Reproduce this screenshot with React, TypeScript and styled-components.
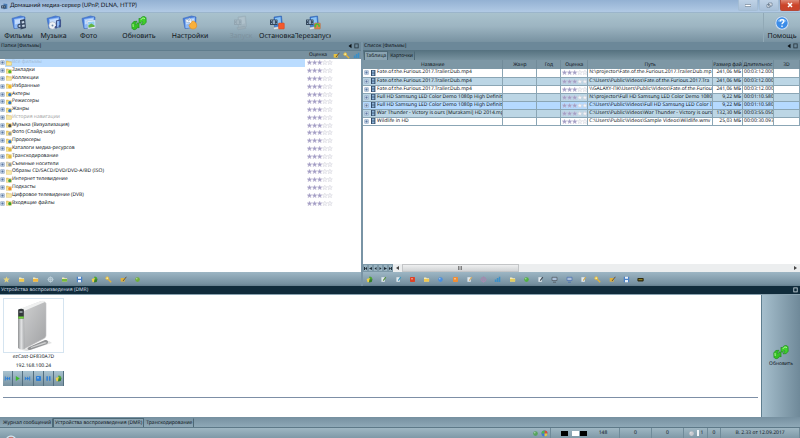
import React from 'react';
import styled, { createGlobalStyle, css } from 'styled-components';

const GlobalStyle = createGlobalStyle`
  * { box-sizing: border-box; }
  html, body { margin: 0; background: #7e9aaa; }
  body, button { font-family: "Noto Sans", sans-serif; font-size: 5px; line-height: 8px; color: #10161b; text-rendering: geometricPrecision; }
  button { border: 0; padding: 0; margin: 0; background: none; }
  ul { list-style: none; margin: 0; padding: 0; }
  svg { flex-shrink: 0; }
`;

const Window = styled.div`
  min-height: 100vh;
  display: flex;
  flex-direction: column;
  overflow: hidden;
`;

const TitleBar = styled.header`
  height: 13px;
  display: flex;
  align-items: center;
  gap: 2px;
  padding-left: 1px;
  background: linear-gradient(#93b1d3, #b1cae5);
  border-bottom: 1px solid #9bb5cb;
`;
const Title = styled.h1`
  flex: 1;
  margin: 0;
  font-family: Lato, "Noto Sans", sans-serif;
  font-size: 6px;
  font-weight: 400;
`;
const WindowButtons = styled.div`
  display: flex;
  gap: 1px;
  align-self: flex-start;
`;
const WindowButton = styled.button<{ $close?: boolean }>`
  width: 20px;
  height: 11px;
  display: grid;
  place-items: center;
  border: 1px solid ${p => (p.$close ? '#b54a38' : '#a4bdd4')};
  border-top: 0;
  border-radius: 0 0 2px 2px;
  background: ${p => (p.$close ? 'linear-gradient(#dd8a76, #cc4429 50%, #c8452c)' : 'linear-gradient(#bfd2e6, #a9c0d8)')};
`;

const Toolbar = styled.nav`
  height: 29px;
  display: flex;
  gap: 15px;
  padding-left: 1px;
  background: linear-gradient(#a9c2cd, #9db5c2 45%, #7892a1);
`;
const ToolGroup = styled.div<{ $end?: boolean }>`
  display: flex;
  ${p => p.$end && css`margin-left: auto; border-left: 1px solid #91a9b6;`}
`;
const ToolButton = styled.button<{ $wide?: boolean }>`
  width: ${p => (p.$wide ? 36 : 35)}px;
  display: flex;
  flex-direction: column;
  align-items: center;
  justify-content: flex-end;
  font-size: 7px;
  line-height: 11px;
  white-space: nowrap;
  &:disabled { color: #7d919d; }
`;
const ToolLabel = styled.span<{ $clip?: boolean }>`
  display: flex;
  justify-content: center;
  width: 100%;
  overflow: ${p => (p.$clip ? 'hidden' : 'visible')};
`;

const Workspace = styled.main`
  height: 244px;
  display: grid;
  grid-template-columns: 361fr 437fr;
  gap: 2px;
  background: #7994a5;
`;
const Panel = styled.section`
  min-width: 0;
  display: flex;
  flex-direction: column;
  background: #fff;
`;
const PanelHeader = styled.h2<{ $dark?: boolean }>`
  height: 8px;
  margin: 0;
  padding: 0 2px 0 1px;
  display: flex;
  align-items: center;
  gap: 3px;
  font-size: 5px;
  font-weight: 400;
  color: ${p => (p.$dark ? '#d3dee4' : '#10161b')};
  background: ${p => (p.$dark ? '#102b3b' : '#6c8899')};
`;
const HeaderText = styled.span`
  flex: 1;
`;
const TreeHeader = styled.div`
  height: 9px;
  padding-right: 1px;
  display: flex;
  align-items: center;
  justify-content: flex-end;
  gap: 3px;
  background: #78919f;
  border-top: 1px solid #607d8d;
`;
const TreeHeading = styled.span`
  width: 24px;
  text-align: center;
`;
const Tree = styled.ul`
  height: 148px;
  display: grid;
  grid-template-rows: repeat(19, 1fr);
  line-height: 7px;
`;
const TreeItem = styled.li`
  display: flex;
  align-items: center;
`;
const TreeName = styled.span<{ $selected?: boolean; $muted?: boolean }>`
  flex: 1;
  height: 100%;
  display: flex;
  align-items: center;
  padding-left: 1px;
  color: ${p => (p.$selected ? '#a3bdd8' : p.$muted ? '#a5a5a5' : '#10161b')};
  background: ${p => (p.$selected ? '#badcff' : '#fff')};
`;
const TreeRating = styled.span`
  width: 56px;
  padding-left: 2px;
  display: flex;
`;

const IconBar = styled.div`
  height: 14px;
  display: flex;
  justify-content: flex-start;
  background: linear-gradient(#9db6c4, #7690a0 85%, #647e8d);
`;
const IconStrip = styled.div<{ $share: number }>`
  width: ${p => p.$share}%;
  display: flex;
  justify-content: space-between;
`;
const IconButton = styled.button`
  width: 13px;
  display: grid;
  place-items: center;
`;
const Spacer = styled.div`
  flex: 1;
`;

const Tabs = styled.div<{ $bottom?: boolean }>`
  height: 10px;
  display: flex;
  align-items: flex-end;
  padding-left: 1px;
  background: ${p => (p.$bottom ? 'linear-gradient(#7690a0, #8fa9b7)' : 'linear-gradient(#55717f, #78929f)')};
`;
const Tab = styled.button<{ $active?: boolean }>`
  height: 9px;
  padding: 0 1px;
  line-height: 7px;
  white-space: nowrap;
  border: 1px solid ${p => (p.$active ? '#4e6977' : 'transparent')};
  border-right-color: #4e6977;
  border-bottom: 0;
  background: ${p => (p.$active ? '#8ba4b2' : 'transparent')};
`;

const FileTable = styled.table`
  width: 100%;
  table-layout: fixed;
  border-collapse: collapse;
  border-spacing: 0;
`;
const Col = styled.col<{ $w: number }>`
  width: ${p => (p.$w / 437) * 100}%;
`;
const HeadCell = styled.th`
  height: 9px;
  padding: 0;
  line-height: 8px;
  font-weight: 400;
  white-space: nowrap;
  overflow: hidden;
  background: #7d97a5;
  border-right: 1px solid #718b99;
`;
const Row = styled.tr<{ $tone: 'plain' | 'alt' | 'selected' }>`
  height: 8px;
  background: ${p => ({ plain: '#fff', alt: '#bcd6e5', selected: '#b5daff' })[p.$tone]};
`;
const Cell = styled.td<{ $right?: boolean }>`
  height: 8px;
  padding: 0 1px;
  line-height: 7px;
  white-space: nowrap;
  overflow: hidden;
  text-align: ${p => (p.$right ? 'right' : 'left')};
  border-right: 1px solid #8ba6b5;
  border-bottom: 1px solid #8ba6b5;
`;
const CellLine = styled.span`
  display: flex;
  align-items: center;
  gap: 1px;
`;

const ScrollRow = styled.div`
  height: 8px;
  display: flex;
  background: #eceeef;
`;
const NavButton = styled.button`
  width: 5px;
  display: grid;
  place-items: center;
  border: 1px solid #7e99a8;
  background: #9ab3c0;
`;
const ScrollArrow = styled.button`
  width: 9px;
  display: grid;
  place-items: center;
`;
const ScrollTrack = styled.div`
  flex: 1;
`;
const ScrollThumb = styled.div`
  width: 30%;
  height: 8px;
  display: grid;
  place-items: center;
  border: 1px solid #c3c5c7;
  background: linear-gradient(#eeeff0, #d2d4d6);
`;

const Devices = styled.section`
  flex: 1;
  display: flex;
  border-top: 1px solid #8aa3b1;
`;
const DeviceArea = styled.div`
  flex: 1;
  padding: 3px 3px 0;
  display: flex;
  flex-direction: column;
  gap: 11px;
  background: #fff;
  border-right: 1px solid #5f7e8f;
`;
const DeviceCard = styled.article`
  width: 61px;
  display: flex;
  flex-direction: column;
  align-items: center;
`;
const DevicePicture = styled.div`
  width: 100%;
  height: 55px;
  display: grid;
  place-items: center;
  border: 1px solid #d5e4f0;
`;
const DeviceText = styled.span`
  line-height: 9px;
`;
const DeviceControls = styled.div`
  width: 100%;
  display: flex;
  height: 15px;
`;
const DeviceButton = styled.button`
  flex: 1;
  display: grid;
  place-items: center;
  border-right: 1px solid #536f80;
  background: linear-gradient(#a9c3d0, #7892a1);
`;
const DeviceLine = styled.hr`
  width: 100%;
  margin: 0;
  border: 0;
  border-top: 1px solid #7d8fa6;
`;
const DeviceSide = styled.aside`
  width: 38px;
  display: grid;
  place-items: center;
  background: linear-gradient(90deg, #a6bfcd, #6f8999);
`;
const SideButton = styled.button`
  display: flex;
  flex-direction: column;
  align-items: center;
`;

const StatusBar = styled.footer`
  height: 11px;
  display: flex;
  background: linear-gradient(#9fb7c3, #7f99a7);
  border-top: 1px solid #5d7988;
`;
const StatusCell = styled.span<{ $w: number }>`
  width: ${p => p.$w}px;
  display: flex;
  align-items: center;
  justify-content: center;
  gap: 2px;
  border-right: 1px solid #708b99;
`;
const Swatches = styled(StatusCell)`
  justify-content: flex-end;
  border: 0;
  gap: 1px;
`;
const Swatch = styled.span<{ $c: string }>`
  width: 7px;
  height: 5px;
  background: ${p => p.$c};
  &:first-child { margin-right: 3px; }
`;

/* ---------- drawings ---------- */

function Stars() {
  const d = 'M2.5 0l.7 1.7 1.8.1-1.4 1.2.5 1.8-1.6-1-1.6 1 .5-1.8L0 1.8l1.8-.1z';
  return (
    <svg width="26" height="5" viewBox="0 0 26 5" aria-label="3 из 5">
      {[0, 1, 2, 3, 4].map(i => (
        <path key={i} d={d} transform={`translate(${i * 5.1} 0)`} fill={i < 3 ? '#a29dc4' : '#f3f3f6'} stroke={i < 3 ? '#c9c6dc' : '#cdcdd6'} strokeWidth=".4" />
      ))}
    </svg>
  );
}

function Expander() {
  return (
    <svg width="5" height="5" viewBox="0 0 5 5">
      <rect x=".5" y=".5" width="4" height="4" rx=".6" fill="#b9cbe0" stroke="#9cb0ca" strokeWidth=".6" />
      <path d="M1.4 2.5h2.2M2.5 1.4v2.2" stroke="#4a6592" strokeWidth=".6" />
    </svg>
  );
}

function FolderIcon({ mark, base = '#f0d36c' }: { mark?: string; base?: string }) {
  return (
    <svg width="6" height="6" viewBox="0 0 6 6">
      <path d="M.3 1h2l.5.7h2.6v3.6H.3z" fill={base} stroke="#c9a545" strokeWidth=".4" />
      <path d="M1 2.6h4.8L5 5.3H.3z" fill="#faeaa2" opacity=".8" />
      {mark && <circle cx="3.8" cy="3.7" r="1.6" fill={mark} />}
    </svg>
  );
}

function FilmMark() {
  return (
    <svg width="6" height="6" viewBox="0 0 6 6">
      <rect x="1" width="4.4" height="6" fill="#344c68" />
      <rect x="2" y=".6" width="2.4" height="2" fill="#8cb3d8" />
      <rect x="2" y="3.4" width="2.4" height="2" fill="#8cb3d8" />
    </svg>
  );
}

function PinIcons({ light }: { light?: boolean }) {
  return (
    <svg width={light ? 5 : 11} height="6" viewBox={light ? '6 0 5 6' : '0 0 11 6'}>
      <path d="M.5 3L3.5.8v4.4z" fill="#0c1216" />
      <rect x="6.8" y=".9" width="3.4" height="4" fill="none" stroke={light ? '#d3dee4' : '#26343c'} strokeWidth=".8" />
    </svg>
  );
}

function MiniIcon({ kind, c }: { kind: string; c: string }) {
  return (
    <svg width="7" height="7" viewBox="0 0 7 7">
      {kind === 'star' && <path d="M3.5.4l.9 2 2.3.2-1.7 1.6.5 2.3-2-1.2-2 1.2.5-2.3L.3 2.6l2.3-.2z" fill={c} />}
      {kind === 'folder' && <><path d="M1 1.5h2.2l.5.7h2.4v3.4H1z" fill="#f4e9b9" /><path d="M1 3h5.1v2.6H1z" fill={c} /></>}
      {kind === 'gear' && <><circle cx="3.5" cy="3.5" r="2.1" fill="none" stroke={c} strokeWidth="1.2" /><path d="M3.5.4v6.2M.4 3.5h6.2" stroke={c} strokeWidth=".8" /></>}
      {kind === 'disk' && <><path d="M.8.8h5.4v5.4H.8z" fill={c} /><path d="M2 .8h3v2H2zM2 4h3v2.2H2z" fill="#e9f1fa" /></>}
      {kind === 'swirl' && <><path d="M3.4.5a3 3 0 013 3H3z" fill="#4ba432" /><path d="M.7 3l3-1 .4 3.7-2.6.5z" fill="#efd148" /><path d="M3.5 3.3h3L5.7 6l-2.8.4z" fill="#347f2a" /></>}
      {kind === 'key' && <><circle cx="2.2" cy="2.2" r="1.4" fill="#f8ec99" stroke={c} strokeWidth=".8" /><path d="M3.2 3.2l3 3" stroke={c} strokeWidth="1.4" /></>}
      {kind === 'brush' && <><path d="M.7 2h4v3.6h-4z" fill={c} /><path d="M6.4.8L3 5" stroke="#6c5533" strokeWidth="1" /></>}
      {kind === 'page' && <><path d="M1.4 1.2h3.4v4.6H1.4z" fill="#e3eaee" /><path d="M5.8 1.2L3.2 4.6" stroke={c} strokeWidth="1.1" /></>}
      {kind === 'box' && <><rect x="1" y="1" width="5" height="5" rx=".8" fill={c} /><path d="M2 2h2v1.4H2z" fill="#fff" opacity=".4" /></>}
      {kind === 'dot' && <><circle cx="3.5" cy="3.6" r="2.3" fill={c} /><circle cx="2.8" cy="2.7" r=".8" fill="#fff" opacity=".5" /></>}
      {kind === 'screen' && <><path d="M1 1.3h5v3.2H1z" fill="#aabfd8" stroke={c} strokeWidth=".7" /><path d="M2 6.2h3" stroke={c} strokeWidth=".8" /></>}
      {kind === 'bars' && <path d="M.8 3.4h1.6V6H.8zM2.8 2h1.6v4H2.8zM4.8.8h1.5V6H4.8z" fill={c} />}
      {kind === 'bar' && <><rect x=".4" y="2" width="6.3" height="3.4" rx=".8" fill={c} /><path d="M1.5 3.7h4" stroke="#d8bf2f" strokeWidth=".7" /></>}
      {kind === 'prev' && <path d="M.8 1.5h1v4h-1zM4 1.5v4l-2-2zM6.2 1.5v4l-2.2-2z" fill={c} />}
      {kind === 'next' && <path d="M.8 1.5v4l2.2-2zM3 1.5v4l2.2-2zM5.2 1.5h1v4h-1z" fill={c} />}
      {kind === 'pause' && <path d="M1.4 1.2h1.5v4.6H1.4zM4 1.2h1.5v4.6H4z" fill={c} />}
      {kind === 'play' && <path d="M1.8 1v5l4-2.5z" fill={c} />}
    </svg>
  );
}

function Frame({ children }: { children?: React.ReactNode }) {
  return (
    <svg width="16" height="16" viewBox="0 0 16 16">
      <path d="M1 3.4L9.5 1l4.5 1-.5 10L3 13.6z" fill="#4a7fdb" stroke="#3566bd" strokeWidth=".6" />
      <path d="M3 4L13 2.3v9.7l-9.5 1.2z" fill="#8fbaf5" />
      <path d="M4 4.8l8-1.3v3.5L4 9.5z" fill="#c4dcfc" />
      {children}
    </svg>
  );
}

function Arrows() {
  return (
    <svg width="16" height="16" viewBox="0 0 16 16">
      <path d="M8 7.8V3.2l1.3 1C10.300 1.300 13.600.600 15 2.800l.2 4.400-2 2.400-3.200.2 1.800-2.500c-.2-1.200-1.400-1-2 .9z" fill="#3fd02b" stroke="#1c8f18" strokeWidth=".7" strokeLinejoin="round" />
      <path d="M8 8.200v4.800l-1.300-1c-1.200 2.900-4.400 3.500-5.700 1.300L.8 8.900l2-2.400L6 6.300 4.200 8.800c.2 1.200 1.400 1 2-.9z" fill="#35c224" stroke="#1c8f18" strokeWidth=".7" strokeLinejoin="round" />
      <path d="M9.800 4.900c1-2 3-2.400 4.100-1.100M2 9l.2 3" stroke="#b2f59a" strokeWidth="1" fill="none" />
    </svg>
  );
}

function ServerIcon({ mark, off }: { mark?: 'stop' | 'restart'; off?: boolean }) {
  return (
    <svg width="16" height="16" viewBox="0 0 16 16" opacity={off ? 0.5 : 1}>
      <path d="M5 2l7.5-1 1 10.5-8 1.5z" fill={off ? '#a5b3bc' : '#3d7cd5'} stroke={off ? '#8797a1' : '#2457a4'} strokeWidth=".5" />
      <path d="M6 3l5.5-1 .6 6.3-5.900 2z" fill={off ? '#bcc8d0' : '#8ac4f7'} />
      <path d="M4 12.5l7.5-1.2 1.5 2-8 1.5z" fill={off ? '#9fabb2' : '#dae2e8'} stroke="#7e8d98" strokeWidth=".4" />
      <rect x="1" y="4.5" width="7.5" height="5.5" rx=".6" fill={off ? '#8795a0' : '#35485c'} />
      <path d="M2 5.3h1v1H2zM2 8h1v1H2zM6.700 5.300h1v1h-1zM6.700 8h1v1h-1zM3.700 5.300h2.300v3.700H3.700z" fill={off ? '#a9b5bd' : '#8fa9c2'} />
      {mark && <rect x="9.5" y="8" width="5.800" height="6" rx=".8" fill={mark === 'stop' ? '#f4592b' : '#d9854e'} stroke={mark === 'stop' ? '#d2451f' : '#b9653a'} strokeWidth=".5" />}
      {mark === 'restart' && <path d="M10.700 12.200a1.900 1.900 0 113.200-.4" fill="none" stroke="#45bd35" strokeWidth="1.6" />}
    </svg>
  );
}

function AppIcon() {
  return (
    <svg width="7" height="7" viewBox="0 0 7 7">
      <path d="M2.5.5L6.3 1v4.8l-3.800.5z" fill="#4b7cb4" />
      <rect x=".2" y="2.4" width="4.4" height="3" fill="#2d4056" />
      <path d="M1 3.200h.8v1.400H1zM2.800 3.200h.8v1.400h-.8z" fill="#bfd0df" />
    </svg>
  );
}

function DeviceDrawing() {
  return (
    <svg width="42" height="53" viewBox="0 0 42 53">
      <defs>
        <linearGradient id="side" x1="0" y1="0" x2="1" y2="1">
          <stop offset="0" stopColor="#d3d4d5" /><stop offset="1" stopColor="#a0a1a3" />
        </linearGradient>
        <linearGradient id="edge" x1="0" y1="0" x2="1" y2="0">
          <stop offset="0" stopColor="#8f9193" /><stop offset=".5" stopColor="#e3e4e5" /><stop offset="1" stopColor="#a8aaac" />
        </linearGradient>
      </defs>
      <path d="M9 51l27-9 3 2-25 8z" fill="#e2e3e3" />
      <path d="M16 48l16-7c3 0 4 2 2 4l-17 6c-3 0-3-2-1-3z" fill="#929496" />
      <path d="M18 48l14-5 2 1-16 5z" fill="#d0d1d2" />
      <path d="M6 11L28 2.5q4-1 5 2v32q0 2-2 3L11 50z" fill="url(#side)" stroke="#c4c5c6" strokeWidth=".6" />
      <path d="M6 10L28 2q3-.6 4.500.8L11 12z" fill="#eff0f0" />
      <path d="M5 11q3-2 6 0l.5 39q-3.500 2-6.500-1z" fill="url(#edge)" />
      <path d="M5.300 10.500q3-1.500 5.500 0v9H5.300z" fill="#34383b" />
      <path d="M6.500 12h3v2h-3z" fill="#8a9398" />
      <path d="M5.300 17.500h5.500v2H5.300z" fill="#71d73b" />
    </svg>
  );
}

/* ---------- data ---------- */

const folders: { name: string; mark?: string; muted?: boolean; base?: string }[] = [
  { name: 'Все фильмы' },
  { name: 'Закладки', mark: '#4fb52d' },
  { name: 'Коллекции' },
  { name: 'Избранные', mark: '#f2b720' },
  { name: 'Актеры', mark: '#2f78c8' },
  { name: 'Режиссеры', mark: '#2f78c8' },
  { name: 'Жанры', mark: '#2f78c8' },
  { name: 'История навигации', muted: true, base: '#efe2ae' },
  { name: 'Музыка (Визуализация)', mark: '#4e5257' },
  { name: 'Фото (Слайд-шоу)', mark: '#8c98a6' },
  { name: 'Продюсеры', mark: '#2f78c8' },
  { name: 'Каталоги медиа-ресурсов', mark: '#e0b83a' },
  { name: 'Транскодирование', mark: '#e0b83a' },
  { name: 'Съемные носители', mark: '#8c98a6', base: '#cdd3da' },
  { name: 'Образы CD/SACD/DVD/DVD-A/BD (ISO)', base: '#efe2ae' },
  { name: 'Интернет телевидение', mark: '#3a9c4b' },
  { name: 'Подкасты', mark: '#f08a2c' },
  { name: 'Цифровое телевидение (DVB)', base: '#efe2ae' },
  { name: 'Входящие файлы', mark: '#3aa02b' },
];

const files: [string, string, string, string, 'plain' | 'alt' | 'selected'][] = [
  ['Fate.of.the.Furious.2017.Trailer.Dub.mp4', 'N:\\projector\\Fate.of.the.Furious.2017.Trailer.Dub.mp', '241,06 МБ', '00:03:12.000', 'plain'],
  ['Fate.of.the.Furious.2017.Trailer.Dub.mp4', 'C:\\Users\\Public\\Videos\\Fate.of.the.Furious.2017.Tra', '241,06 МБ', '00:03:12.000', 'alt'],
  ['Fate.of.the.Furious.2017.Trailer.Dub.mp4', '\\\\GALAXY-ПК\\Users\\Public\\Videos\\Fate.of.the.Furiou', '241,06 МБ', '00:03:12.000', 'plain'],
  ['Full HD Samsung LED Color Demo 1080p High Definitic', 'N:\\projector\\Full HD Samsung LED Color Demo 1080p', '9,22 МБ', '00:01:10.580', 'alt'],
  ['Full HD Samsung LED Color Demo 1080p High Definitic', 'C:\\Users\\Public\\Videos\\Full HD Samsung LED Color I', '9,22 МБ', '00:01:10.580', 'selected'],
  ['War Thunder - Victory is ours [Murakami] HD 2014.mp', 'C:\\Users\\Public\\Videos\\War Thunder - Victory is ours', '132,30 МБ', '00:03:55.050', 'alt'],
  ['Wildlife in HD', 'C:\\Users\\Public\\Videos\\Sample Videos\\Wildlife.wmv', '25,03 МБ', '00:00:30.093', 'plain'],
];

const leftIcons = [['star', '#e5d37c'], ['folder', '#f2c84b'], ['folder', '#f3b73c'], ['gear', '#b9ccd6'], ['folder', '#76b83d'], ['disk', '#4a82c8'], ['swirl', ''], ['key', '#e0b23a'], ['brush', '#dfb03c'], ['dot', '#6fae39']];
const rightIcons = [['swirl', ''], ['page', '#58903c'], ['page', '#3d98bd'], ['box', '#dd4226'], ['folder', '#f2c84b'], ['dot', '#4b8fde'], ['box', '#ef8d35'], ['page', '#d9ad63'], ['gear', '#a18cae'], ['bars', '#3b8fc7'], ['folder', '#e3cc5a'], ['dot', '#52b043'], ['page', '#3f4b55'], ['screen', '#50585f'], ['screen', '#4a6fb0'], ['page', '#d3a94c'], ['key', '#e0b23a'], ['brush', '#dfb03c'], ['disk', '#4a82c8'], ['bar', '#2d2a12']];

function Tool({ label, icon, wide, disabled, clip }: { label: string; icon: React.ReactNode; wide?: boolean; disabled?: boolean; clip?: boolean }) {
  return (
    <ToolButton $wide={wide} disabled={disabled}>
      {icon}
      <ToolLabel $clip={clip}>{label}</ToolLabel>
    </ToolButton>
  );
}

export default function App() {
  return (
    <Window>
      <GlobalStyle />
      <TitleBar>
        <AppIcon />
        <Title>Домашний медиа-сервер (UPnP, DLNA, HTTP)</Title>
        <WindowButtons>
          <WindowButton aria-label="Свернуть"><svg width="6" height="4"><path d="M0 1.500h6v2H0z" fill="#fff" stroke="#64778a" strokeWidth=".6" /></svg></WindowButton>
          <WindowButton aria-label="Восстановить"><svg width="7" height="6"><path d="M2.500 1h3.500v3H2.500zM1 2.500h3v2.800H1z" fill="#eef4fa" stroke="#64778a" strokeWidth=".7" /></svg></WindowButton>
          <WindowButton $close aria-label="Закрыть"><svg width="6" height="6"><path d="M1 1l4 4M5 1L1 5" stroke="#fff" strokeWidth="1.500" /></svg></WindowButton>
        </WindowButtons>
      </TitleBar>

      <Toolbar>
        <ToolGroup>
          <Tool label="Фильмы" icon={<Frame><path d="M9 5l5-1 1 9-5.500 1.500z" fill="#34455e" /><circle cx="8.500" cy="11" r="2.200" fill="#3d4f6b" /><circle cx="8.500" cy="11" r="1" fill="#c4d5e6" /><path d="M10.500 6.500l2.500-.5.4 2-2.500.5zM11 10l2.500-.5.4 2-2.500.5z" fill="#c4d5e6" /></Frame>} />
          <Tool label="Музыка" icon={<Frame><circle cx="6.500" cy="10.500" r="3.700" fill="#eef1f5" stroke="#8d9bb3" strokeWidth=".5" /><circle cx="6.500" cy="10.500" r="1" fill="#7189ab" /><path d="M10.500 12V6l4-1v6" fill="none" stroke="#40548c" strokeWidth="1.100" /><circle cx="10" cy="12.300" r="1.300" fill="#40548c" /><circle cx="13.800" cy="11.300" r="1.200" fill="#40548c" /></Frame>} />
          <Tool label="Фото" icon={<Frame><path d="M6 6l8.500-1v8L7 14z" fill="#f3f7fb" stroke="#8ba5c5" strokeWidth=".4" /><path d="M7 7l6.600-.8v5.500l-6 .9z" fill="#8fcdf0" /><path d="M7.300 10.500l3-2 3.300 2v1.300l-6 .9z" fill="#65b343" /></Frame>} />
        </ToolGroup>
        <ToolGroup><Tool wide label="Обновить" icon={<Arrows />} /></ToolGroup>
        <ToolGroup>
          <Tool wide label="Настройки" icon={<Frame><path d="M5 4c-2 1-1.500 3.500.5 3.500l1.500-.5 4 4.500 2-1.500-3.800-4.500c.3-1.700-1.200-2.700-2.700-2.200l1.300 1.600-1 1z" fill="#f4f6f8" stroke="#8396ad" strokeWidth=".5" /><path d="M7 10.500L10.500 6c2.500-.3 5 3.500 4 6-1.300 2.500-4.500 2.500-6.500.8z" fill="#fab03a" stroke="#e38a1c" strokeWidth=".6" /></Frame>} />
        </ToolGroup>
        <ToolGroup>
          <Tool wide disabled label="Запуск" icon={<ServerIcon off />} />
          <Tool wide label="Остановка" icon={<ServerIcon mark="stop" />} />
          <Tool wide clip label="Перезапуск" icon={<ServerIcon mark="restart" />} />
        </ToolGroup>
        <ToolGroup $end>
          <Tool wide label="Помощь" icon={<svg width="16" height="16" viewBox="0 0 16 16"><circle cx="8" cy="8" r="7" fill="#d9e7f5" stroke="#8ba5bd" strokeWidth=".6" /><circle cx="8" cy="8" r="5.700" fill="#3c8ce8" /><path d="M3.500 6.500a4.700 4 0 019 0z" fill="#86bdf6" /><path d="M6.200 6.500c0-2.500 3.700-2.300 3.700-.2 0 1.300-1.900 1.400-1.900 3M8 10.500v1.400" fill="none" stroke="#fff" strokeWidth="1.300" /></svg>} />
        </ToolGroup>
      </Toolbar>

      <Workspace>
        <Panel>
          <PanelHeader><HeaderText>Папки [Фильмы]</HeaderText><PinIcons /></PanelHeader>
          <TreeHeader>
            <TreeHeading>Оценка</TreeHeading>
            <MiniIcon kind="brush" c="#e7c23d" />
            <MiniIcon kind="key" c="#e0b23a" />
            <MiniIcon kind="bars" c="#3b8fc7" />
          </TreeHeader>
          <Tree>
            {folders.map((f, i) => (
              <TreeItem key={f.name}>
                <Expander />
                <TreeName $selected={i === 0} $muted={f.muted}><FolderIcon mark={f.mark} base={f.base} />{f.name}</TreeName>
                <TreeRating><Stars /></TreeRating>
              </TreeItem>
            ))}
          </Tree>
          <Spacer />
          <IconBar>
            <IconStrip $share={40}>
              {leftIcons.map(([k, c], i) => <IconButton key={i}><MiniIcon kind={k} c={c} /></IconButton>)}
            </IconStrip>
          </IconBar>
        </Panel>

        <Panel>
          <PanelHeader><HeaderText>Список [Фильмы]</HeaderText><PinIcons /></PanelHeader>
          <Tabs><Tab $active>Таблица</Tab><Tab>Карточки</Tab></Tabs>
          <FileTable>
            <colgroup>{[140, 34, 24, 27, 125, 30, 31, 26].map((w, i) => <Col key={i} $w={w} />)}</colgroup>
            <thead>
              <tr>{['Название', 'Жанр', 'Год', 'Оценка', 'Путь', 'Размер фай', 'Длительнос', '3D'].map(h => <HeadCell key={h}>{h}</HeadCell>)}</tr>
            </thead>
            <tbody>
              {files.map(([name, path, size, time, tone], i) => (
                <Row key={i} $tone={tone}>
                  <Cell><CellLine><Expander /><FilmMark />{name}</CellLine></Cell>
                  <Cell /><Cell />
                  <Cell><CellLine><Stars /></CellLine></Cell>
                  <Cell>{path}</Cell>
                  <Cell $right>{size}</Cell>
                  <Cell>{time}</Cell>
                  <Cell />
                </Row>
              ))}
            </tbody>
          </FileTable>
          <Spacer />
          <ScrollRow>
            {['M3 0v3L1 1.500zM0 0h1v3H0z', 'M3 0v3L0 1.500z', 'M2.500 0v3L.5 1.500z', 'M.5 0v3l2-1.500z', 'M0 0v3l3-1.500z', 'M0 0v3l2-1.500zM2 0h1v3H2z'].map(d => (
              <NavButton key={d}><svg width="3" height="3"><path d={d} fill="#22303a" /></svg></NavButton>
            ))}
            <ScrollArrow aria-label="Влево"><svg width="3" height="4"><path d="M3 0v4L0 2z" fill="#444" /></svg></ScrollArrow>
            <ScrollTrack><ScrollThumb><svg width="4" height="4"><path d="M.5 0v4M2 0v4M3.500 0v4" stroke="#555" strokeWidth=".7" /></svg></ScrollThumb></ScrollTrack>
            <ScrollArrow aria-label="Вправо"><svg width="3" height="4"><path d="M0 0v4l3-2z" fill="#444" /></svg></ScrollArrow>
          </ScrollRow>
          <IconBar>
            <IconStrip $share={65}>
              {rightIcons.map(([k, c], i) => <IconButton key={i}><MiniIcon kind={k} c={c} /></IconButton>)}
            </IconStrip>
          </IconBar>
        </Panel>
      </Workspace>

      <PanelHeader $dark><HeaderText>Устройства воспроизведения (DMR)</HeaderText><PinIcons light /></PanelHeader>
      <Devices>
        <DeviceArea>
          <DeviceCard>
            <DevicePicture><DeviceDrawing /></DevicePicture>
            <DeviceText>ezCast-DF830A7D</DeviceText>
            <DeviceText>192.168.100.24</DeviceText>
            <DeviceControls>
              {[['prev', '#2e7fd6'], ['play', '#3dba2c'], ['next', '#2e7fd6'], ['box', '#2e7fd6'], ['pause', '#2e7fd6'], ['swirl', '']].map(([k, c]) => (
                <DeviceButton key={k}><MiniIcon kind={k} c={c} /></DeviceButton>
              ))}
            </DeviceControls>
          </DeviceCard>
          <DeviceLine />
        </DeviceArea>
        <DeviceSide><SideButton><Arrows />Обновить</SideButton></DeviceSide>
      </Devices>

      <Tabs $bottom><Tab>Журнал сообщений</Tab><Tab $active>Устройства воспроизведения (DMR)</Tab><Tab>Транскодирование</Tab></Tabs>
      <StatusBar>
        <svg width="22" height="10" viewBox="0 0 22 10"><circle cx="11" cy="14" r="6" fill="#a8bed0" stroke="#e4edf3" strokeWidth="1" /><path d="M9 10h4" stroke="#c76a5b" strokeWidth="1.500" /></svg>
        <Spacer />
        <StatusCell $w={22}><MiniIcon kind="dot" c="#57a35d" /><svg width="7" height="7"><circle cx="3.500" cy="3.500" r="3" fill="#3f78d8" /><path d="M3.500 3.500V.5a3 3 0 013 3z" fill="#e04b36" /><path d="M3.500 3.500h-3a3 3 0 013-3z" fill="#4db848" /><path d="M3.500 3.500h3a3 3 0 01-3 3z" fill="#e8c63a" /></svg></StatusCell>
        <Swatches $w={36}><Swatch $c="#000" /><Swatch $c="#fff" /><Swatch $c="#000" /></Swatches>
        <StatusCell $w={33}>148</StatusCell>
        <StatusCell $w={32}>0</StatusCell>
        <StatusCell $w={32}>0</StatusCell>
        <StatusCell $w={24}><MiniIcon kind="dot" c="#c9c9cf" /><svg width="2" height="6"><path d="M0 0h2v6H0z" fill="#f2f6f8" /></svg>1</StatusCell>
        <StatusCell $w={13}>0</StatusCell>
        <StatusCell $w={79}>В. 2.33 от 12.09.2017</StatusCell>
      </StatusBar>
    </Window>
  );
}
